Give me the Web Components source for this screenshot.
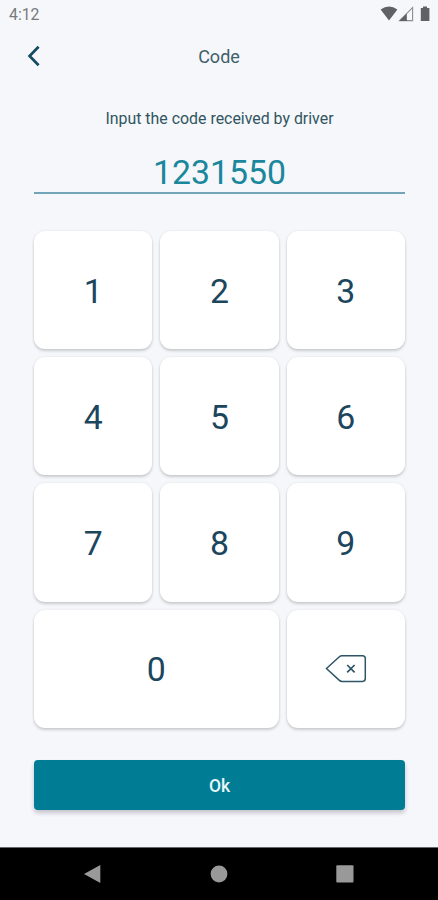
<!DOCTYPE html>
<html lang="en">
<head>
<meta charset="utf-8">
<meta name="viewport" content="width=device-width,initial-scale=1">
<title>Code</title>
<style>
html,body{margin:0;height:100%}
body{font-family:Roboto,sans-serif;color:#16455a;background:#f5f7fb}
</style>
</head>
<body>
<code-screen>
  <status-bar time="4:12"></status-bar>
  <app-header>Code</app-header>
  <code-field label="Input the code received by driver" value="1231550"></code-field>
  <key-pad></key-pad>
  <action-button>Ok</action-button>
  <nav-bar slot="nav"></nav-bar>
</code-screen>
<script>
class CodeScreen extends HTMLElement{
constructor(){
  super();
  this.attachShadow({mode:'open'}).innerHTML=`<style>
:host{display:flex;flex-direction:column;width:438px;height:900px;overflow:hidden;background:#f5f7fb}
main{display:flex;flex-direction:column;flex:1}
</style><main><slot></slot></main><slot name="nav"></slot>`;
}
connectedCallback(){
  const field=this.querySelector('code-field');
  this.addEventListener('key',e=>{
    const v=field.getAttribute('value');
    field.setAttribute('value',e.detail==='back'?v.slice(0,-1):v+e.detail);
  });
}
}

class StatusBar extends HTMLElement{
connectedCallback(){
  this.attachShadow({mode:'open'}).innerHTML=`<style>
:host{display:flex;justify-content:space-between;height:30px;padding:0 8px 0 9px;box-sizing:border-box;color:#77797c;font-size:15.8px;line-height:30px}
svg{display:block;margin-top:6px}
</style><span>${this.getAttribute('time')}</span>
<svg width="50" height="16" viewBox="380 6 50 16" fill="#606164">
<path d="M380.6 9.6Q389 3.6 397.4 9.6L389 20.6Z"/>
<path d="M412.6 7.6V20.6H399.6Z" fill="none" stroke="#8b8d90" stroke-width="1.1"/>
<path d="M406.8 13.4V21H399.2Z"/>
<path d="M420.8 8H423V6.6H427V8H429.4V21H420.8Z"/>
</svg>`;
}
}

class AppHeader extends HTMLElement{
constructor(){
  super();
  this.attachShadow({mode:'open'}).innerHTML=`<style>
:host{display:grid;grid-template-columns:48px 1fr 48px;align-items:center;height:52px;color:#3f5f6a;font-size:18px;text-align:center}
button{display:flex;justify-content:flex-end;padding:0 7px 0 0;border:0;background:none}
</style><button aria-label="Back"><svg width="14" height="22" viewBox="0 0 14 22" fill="none" stroke="#174a60" stroke-width="2.7"><path d="M11.6 1.8L2.6 11L11.6 20.2"/></svg></button>
<span><slot></slot></span>`;
}
}

class CodeField extends HTMLElement{
static observedAttributes=['value'];
constructor(){
  super();
  this.attachShadow({mode:'open'}).innerHTML=`<style>
:host{display:flex;flex-direction:column;margin:0 33px 0 34px;text-align:center}
label{margin-top:25px;height:24px;line-height:24px;font-size:15.9px;color:#315560}
output{margin-top:21px;height:40px;line-height:42px;font-size:33.8px;color:#1a879d;border-bottom:2px solid #72a5b8}
</style><label></label><output></output>`;
}
connectedCallback(){
  this.shadowRoot.querySelector('label').textContent=this.getAttribute('label');
}
attributeChangedCallback(name,old,value){
  this.shadowRoot.querySelector('output').textContent=value;
}
}

class PadKey extends HTMLElement{
constructor(){
  super();
  this.attachShadow({mode:'open'}).innerHTML=`<style>
:host{display:flex;align-items:center;justify-content:center;border-radius:11px;background:#fff;box-shadow:0 2px 3px rgba(0,0,0,.17),0 0 3px rgba(0,0,0,.07);font-size:33.8px;color:#1b465d;cursor:pointer}
span{padding-top:2px}
</style><span><slot></slot></span>`;
}
connectedCallback(){
  this.addEventListener('click',_=>this.dispatchEvent(
    new CustomEvent('key',{detail:this.getAttribute('key'),bubbles:true,composed:true})));
}
}

class KeyPad extends HTMLElement{
constructor(){
  super();
  const digits=[1,2,3,4,5,6,7,8,9,0];
  this.attachShadow({mode:'open'}).innerHTML=`<style>
:host{display:grid;grid-template-columns:repeat(3,1fr);grid-auto-rows:118.2px;gap:8px;margin:37px 33px 0 34px}
[key="0"]{grid-column:span 2}
svg{display:block;margin-top:-2px}
</style>${digits.map(n=>`<pad-key key="${n}">${n}</pad-key>`).join('')}
<pad-key key="back"><svg width="42" height="30" viewBox="0 0 42 30" fill="none" stroke="#2c5568" stroke-width="1.5" stroke-linejoin="round"><path d="M1.4 14.5L14.4 2.8Q15.5 1.8 17 1.8H37.5Q40.3 1.8 40.3 4.6V24.6Q40.3 27.4 37.5 27.4H17Q15.5 27.4 14.4 26.4Z"/><path d="M22.2 11L29.6 18.4M29.6 11L22.2 18.4" stroke-width="1.7"/></svg></pad-key>`;
}
}

class ActionButton extends HTMLElement{
constructor(){
  super();
  this.attachShadow({mode:'open'}).innerHTML=`<style>
:host{display:block;margin:32.2px 33px 0 34px}
button{display:block;width:100%;height:50px;padding:2px 0 0;border:0;border-radius:4px;background:#007d94;color:#e9f6f8;font:500 17.5px Roboto,sans-serif;box-shadow:0 3px 4px rgba(40,20,40,.22)}
</style><button><slot></slot></button>`;
}
}

class NavBar extends HTMLElement{
constructor(){
  super();
  this.attachShadow({mode:'open'}).innerHTML=`<style>
:host{display:flex;align-items:center;justify-content:center;gap:108px;height:53px;box-sizing:border-box;border-top:1px solid #66686a;background:#000}
svg{display:block;fill:#999}
</style><svg width="18" height="18"><path d="M0 9L16.3 0V18Z"/></svg>
<svg width="18" height="18"><circle cx="9" cy="9" r="8.4"/></svg>
<svg width="18" height="18"><rect x=".3" y=".3" width="17.2" height="17.2" rx="1"/></svg>`;
}
}

customElements.define('code-screen',CodeScreen);
customElements.define('status-bar',StatusBar);
customElements.define('app-header',AppHeader);
customElements.define('code-field',CodeField);
customElements.define('pad-key',PadKey);
customElements.define('key-pad',KeyPad);
customElements.define('action-button',ActionButton);
customElements.define('nav-bar',NavBar);
</script>
</body>
</html>
